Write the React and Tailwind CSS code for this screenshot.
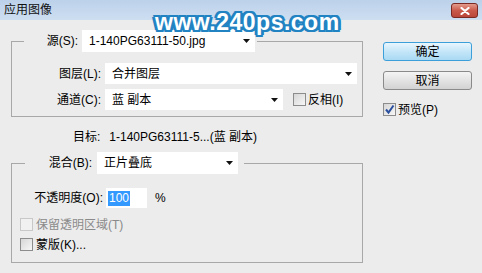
import React from "react";

// little black triangle used by the dropdowns
const Arrow = () => (
  <svg width="7" height="4" viewBox="0 0 7 4" className="shrink-0">
    <path d="M0 0H7L3.5 4Z" fill="#111" />
  </svg>
);

function Select({ value, className }) {
  return (
    <div className={`bg-white flex items-center justify-between pl-[7px] pr-[5px] ${className}`}>
      <span className="whitespace-nowrap">{value}</span>
      <Arrow />
    </div>
  );
}

function Box({ checked, disabled }) {
  return (
    <span
      className={`w-[13px] h-[13px] shrink-0 border flex items-center justify-center ${
        disabled
          ? "border-[#c8c8c8] bg-[#f1f1f1]"
          : "border-[#8c8c8c] bg-gradient-to-br from-[#d6d6d6] to-[#f7f7f7]"
      }`}
    >
      {checked && (
        <svg width="11" height="11" viewBox="0 0 11 11">
          <path d="M2 5.5L4.5 8.5L9.5 1.5" fill="none" stroke="#2a4f9f" strokeWidth="2" />
        </svg>
      )}
    </span>
  );
}

export default function App() {
  return (
    <div className="w-[482px] h-[273px] relative overflow-hidden bg-[#ececec] text-[12px] leading-none text-black font-['Liberation_Sans','Noto_Sans_CJK_SC',sans-serif]">
      {/* TITLE BAR */}
      <div className="h-[20px] flex items-center justify-between pl-[4px] pr-[4px] bg-gradient-to-b from-[#bcd1ea] to-[#cddef1]">
        <span className="text-[12px] text-[#111]">应用图像</span>
        <div className="w-[27px] h-[15px] mt-[1px] rounded-[3px] border border-[#7a2a22] bg-gradient-to-b from-[#e39a8d] via-[#c95a4b] to-[#b9463a] flex items-center justify-center">
          <svg width="10" height="8" viewBox="0 0 10 8">
            <path d="M1.5 1L8.5 7M8.5 1L1.5 7" stroke="#fff" strokeWidth="2.2" strokeLinecap="round" />
          </svg>
        </div>
      </div>

      <div className="flex">
        {/* LEFT */}
        <div className="w-[370px] pl-[11px]">
          <fieldset className="w-[352px] mt-[10px] pl-[12px] border border-[#a8a8a8]">
            <legend className="px-[2px]">
              <div className="flex items-center gap-[4px]">
                <span className="w-[52px] text-right">源(S):</span>
                <Select value="1-140PG63111-50.jpg" className="w-[173px] h-[22px]" />
              </div>
            </legend>
            <div className="flex flex-col gap-[5px] mt-[11px] pb-[6px]">
              <div className="flex items-center h-[21px]">
                <span className="w-[77px] text-right">图层(L):</span>
                <Select value="合并图层" className="ml-[4px] w-[252px] h-[21px]" />
              </div>
              <div className="flex items-center h-[21px]">
                <span className="w-[77px] text-right">通道(C):</span>
                <Select value="蓝 副本" className="ml-[4px] w-[178px] h-[21px]" />
                <div className="flex items-center gap-[2px] ml-[10px]">
                  <Box />
                  <span>反相(I)</span>
                </div>
              </div>
            </div>
          </fieldset>

          <div className="mt-[12px] ml-[62px] h-[16px] flex items-center">
            <span>目标:</span>
            <span className="ml-[9px]">1-140PG63111-5...(蓝 副本)</span>
          </div>

          <fieldset className="w-[352px] mt-[7px] pl-[8px] border border-[#a8a8a8]">
            <legend className="ml-[5px] pl-[2px] pr-[6px]">
              <div className="flex items-center gap-[5px]">
                <span className="w-[65px] text-right">混合(B):</span>
                <Select value="正片叠底" className="w-[141px] h-[22px]" />
              </div>
            </legend>
            <div className="flex items-center h-[20px] mt-[14px]">
              <span className="w-[83px] text-right">不透明度(O):</span>
              <div className="ml-[3px] w-[41px] h-[20px] bg-white flex items-center pl-[2px]">
                <span className="bg-[#3399ff] text-white px-[1px] h-[15px] flex items-center">100</span>
              </div>
              <span className="ml-[8px]">%</span>
            </div>
            <div className="flex items-center gap-[3px] mt-[10px] h-[13px] text-[#8a8a8a]">
              <Box disabled />
              <span>保留透明区域(T)</span>
            </div>
            <div className="flex items-center gap-[3px] mt-[7px] h-[13px] mb-[11px]">
              <Box />
              <span>蒙版(K)...</span>
            </div>
          </fieldset>
        </div>

        {/* RIGHT */}
        <div className="pl-[13px] flex flex-col">
          <button className="mt-[22px] w-[89px] h-[19px] rounded-[3px] border border-[#3c9fd9] bg-gradient-to-b from-[#e9f6fd] via-[#c4e6f8] to-[#a9d9f3] flex items-center justify-center">
            确定
          </button>
          <button className="mt-[10px] w-[89px] h-[19px] rounded-[3px] border border-[#8a8a8a] bg-gradient-to-b from-[#f4f4f4] via-[#e3e3e3] to-[#d2d2d2] flex items-center justify-center">
            取消
          </button>
          <div className="mt-[13px] flex items-center gap-[2px]">
            <Box checked />
            <span>预览(P)</span>
          </div>
        </div>
      </div>

      {/* watermark over the title bar */}
      <div className="absolute left-[155px] top-[11px] text-[23px] font-bold text-white tracking-[0.5px] [text-shadow:2px_0_0_#2283c3,-2px_0_0_#2283c3,0_2px_0_#2283c3,0_-2px_0_#2283c3,2px_2px_0_#2283c3,-2px_-2px_0_#2283c3,2px_-2px_0_#2283c3,-2px_2px_0_#2283c3,3px_0_0_#2283c3,-3px_0_0_#2283c3]">
        www.240ps.com
      </div>
    </div>
  );
}
